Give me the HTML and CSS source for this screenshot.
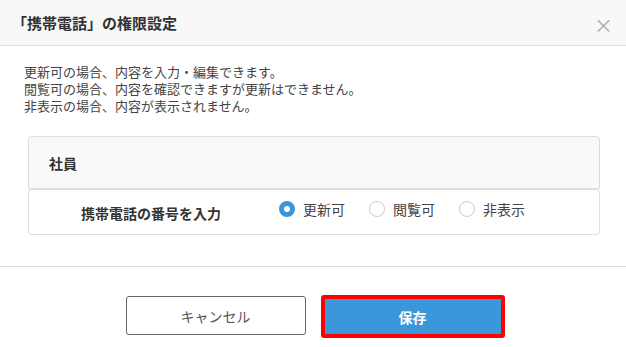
FILE: index.html
```html
<!DOCTYPE html>
<html lang="ja">
<head>
    <meta charset="UTF-8">
    <meta name="viewport" content="width=device-width, initial-scale=1.0">
    <title>権限設定</title>
    <link rel="stylesheet" href="styles.css">
</head>
<body>
    <div class="modal">
        <!-- ヘッダー -->
        <div class="modal-header">
            <h2 class="modal-title">「携帯電話」の権限設定</h2>
            <span class="modal-close">&times;</span>
        </div>

        <!-- 本文 -->
        <div class="modal-body">
            <p class="modal-desc">
                更新可の場合、内容を入力・編集できます。<br>
                閲覧可の場合、内容を確認できますが更新はできません。<br>
                非表示の場合、内容が表示されません。
            </p>

            <div class="perm-card">
                <div class="perm-head">社員</div>
                <div class="perm-row">
                    <div class="perm-label">携帯電話の番号を入力</div>
                    <div class="perm-options">
                        <label class="radio"><span class="radio-mark checked"></span>更新可</label>
                        <label class="radio"><span class="radio-mark"></span>閲覧可</label>
                        <label class="radio"><span class="radio-mark"></span>非表示</label>
                    </div>
                </div>
            </div>
        </div>

        <!-- フッター -->
        <div class="modal-footer">
            <button class="btn btn-cancel">キャンセル</button>
            <button class="btn btn-save">保存</button>
        </div>
    </div>
</body>
</html>
```

FILE: styles.css
```css
body {
    margin: 0;
    padding: 0;
    background-color: #fff;
    font-family: "Noto Sans CJK JP", "Noto Sans", sans-serif;
    color: #333;
}
/*ヘッダー*/
.modal-header {
    display: flex;
    justify-content: space-between;
    align-items: center;
    height: 45px;
    padding: 0 12px;
    background-color: #f8f8f8;
    border-bottom: 1px solid #ddd;
}
.modal-title {
    margin: 0;
    font-size: 15px;
    font-weight: bold;
    color: #333;
}
.modal-close {
    font-size: 19px;
    line-height: 1;
    color: #aaa;
    margin-right: 1px;
    margin-top: 3px;
}
/*本文*/
.modal-body {
    padding: 17px 26px 31px 24px;
    border-bottom: 1px solid #ddd;
}
.modal-desc {
    margin: 0 0 22px 0;
    font-size: 13px;
    line-height: 17px;
    color: #444;
}
.perm-card {
    margin-left: 4px;
}
.perm-head {
    height: 51px;
    display: flex;
    align-items: center;
    padding-left: 20px;
    background-color: #f9f9f9;
    border: 1px solid #ddd;
    border-radius: 4px 4px 0 0;
    font-size: 14px;
    font-weight: bold;
}
.perm-row {
    display: flex;
    align-items: center;
    height: 44px;
    border: 1px solid #ddd;
    border-radius: 4px;
}
.perm-label {
    width: 244px;
    text-align: center;
    font-size: 14px;
    font-weight: bold;
    padding-top: 2px;
}
.perm-options {
    display: flex;
    gap: 24px;
    padding-left: 6px;
    margin-top: -6px;
}
.radio {
    display: flex;
    align-items: center;
    gap: 8px;
    font-size: 14px;
    color: #444;
}
.radio-mark {
    width: 16px;
    height: 16px;
    box-sizing: border-box;
    border: 1px solid #ccc;
    border-radius: 50%;
    background-color: #fff;
}
.radio-mark.checked {
    border: 5px solid #3a96d8;
}
/*フッター*/
.modal-footer {
    display: flex;
    justify-content: center;
    gap: 15px;
    padding: 28px 0 0 4px;
}
.btn {
    height: 39px;
    width: 180px;
    border-radius: 3px;
    font-family: inherit;
    font-size: 14px;
    cursor: pointer;
}
.btn-cancel {
    background-color: #fff;
    border: 1px solid #666;
    color: #555;
    margin-top: 1px;
}
.btn-save {
    height: 43px;
    width: 184px;
    background-color: #3a97da;
    border: 4px solid #ff0000;
    color: #fff;
    font-weight: bold;
}
```
